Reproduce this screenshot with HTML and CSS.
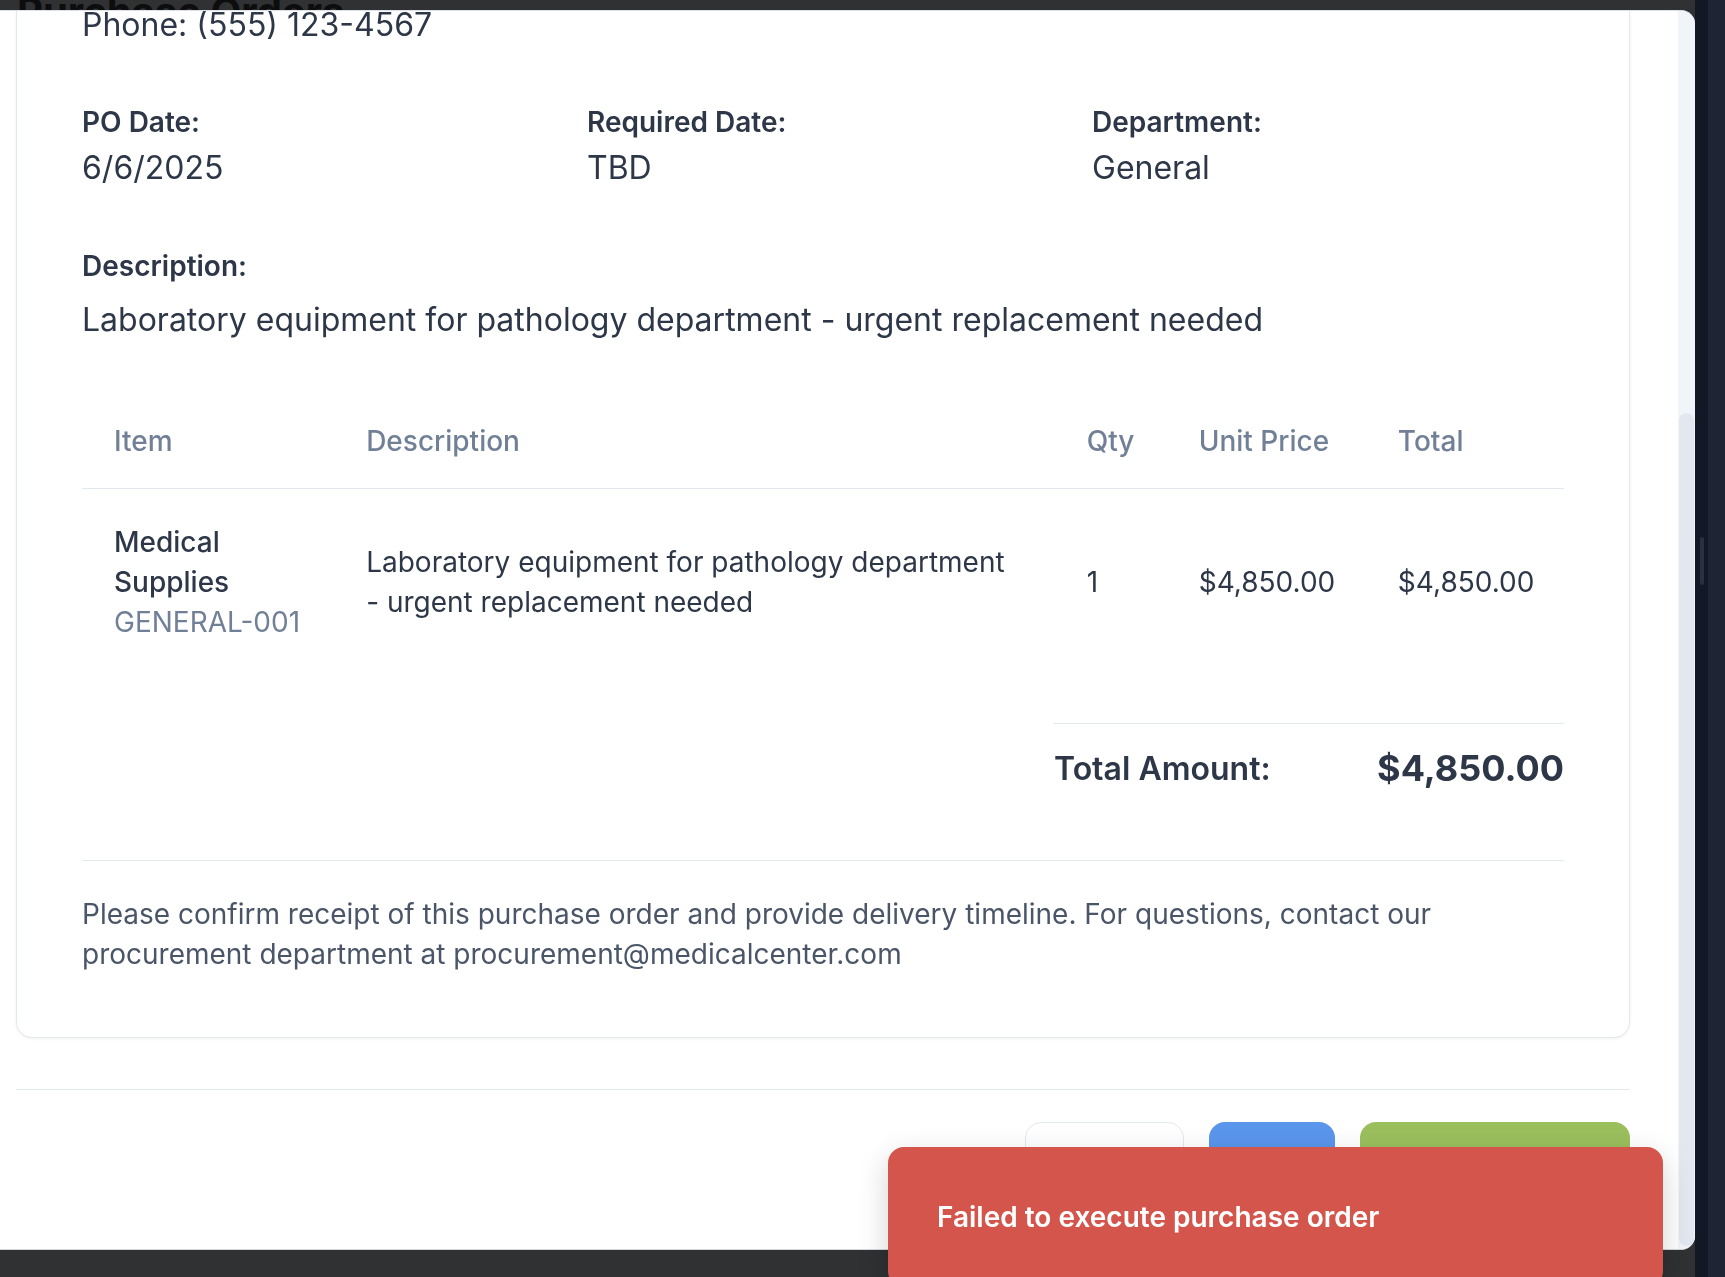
FILE: index.html
```html
<!DOCTYPE html>
<html lang="en">
<head>
<meta charset="utf-8">
<title>Purchase Order Preview</title>
<link rel="stylesheet" href="styles.css">
</head>
<body>
<div class="page">
  <main class="page-main">
    <h1 class="page-title">Purchase Orders</h1>
  </main>
  <aside class="page-rail">
    <div class="rail-a"><div class="rail-thumb"></div></div>
    <div class="rail-b"></div>
  </aside>
</div>

<div class="modal">
  <div class="modal-body">
    <section class="po-card">
      <div class="po-head">
        <div class="po-title">PURCHASE ORDER</div>
        <div class="po-number">PO-2025-0042</div>
      </div>
      <div class="vendor">
        <p class="vendor-heading">Vendor Information</p>
        <p>MedTech Supplies Inc.</p>
        <p>1250 Industrial Parkway, Suite 300</p>
        <p>vendor@medtechsupplies.com</p>
        <p>Phone: (555) 123-4567</p>
      </div>

      <div class="info-grid">
        <div class="info-item">
          <div class="label">PO Date:</div>
          <div class="value">6/6/2025</div>
        </div>
        <div class="info-item">
          <div class="label">Required Date:</div>
          <div class="value">TBD</div>
        </div>
        <div class="info-item">
          <div class="label">Department:</div>
          <div class="value">General</div>
        </div>
      </div>

      <div class="desc-block">
        <div class="label">Description:</div>
        <div class="value desc-value">Laboratory equipment for pathology department - urgent replacement needed</div>
      </div>

      <table class="items">
        <colgroup>
          <col class="col-item">
          <col class="col-desc">
          <col class="col-qty">
          <col class="col-unit">
          <col class="col-total">
        </colgroup>
        <thead>
          <tr>
            <th>Item</th>
            <th>Description</th>
            <th>Qty</th>
            <th>Unit Price</th>
            <th>Total</th>
          </tr>
        </thead>
        <tbody>
          <tr>
            <td>
              <div class="item-name">Medical Supplies</div>
              <div class="item-code">GENERAL-001</div>
            </td>
            <td>Laboratory equipment for pathology department - urgent replacement needed</td>
            <td>1</td>
            <td>$4,850.00</td>
            <td>$4,850.00</td>
          </tr>
        </tbody>
      </table>

      <div class="totals">
        <span class="total-label">Total Amount:</span>
        <span class="total-value">$4,850.00</span>
      </div>

      <div class="notes">Please confirm receipt of this purchase order and provide delivery timeline. For questions, contact our procurement department at procurement@medicalcenter.com</div>
    </section>

    <div class="modal-footer">
      <button class="btn btn-outline">Cancel</button>
      <button class="btn btn-blue">Print</button>
      <button class="btn btn-green">Execute Order</button>
    </div>
  </div>
  <div class="scroll-track"><div class="scroll-thumb"></div></div>
</div>

<div class="toast" role="alert">Failed to execute purchase order</div>
</body>
</html>
```

FILE: styles.css
```css
* { box-sizing: border-box; }

html, body {
  margin: 0;
  height: 100%;
}

body {
  font-family: Inter, "Noto Sans", "Liberation Sans", sans-serif;
  background: #303133;
  color: #2d3748;
  overflow: hidden;
}

/* page behind the overlay */
.page {
  display: flex;
  height: 100vh;
}

.page-main {
  flex: 1;
  background: #303133;
}

.page-title {
  margin: -12px 0 0 17px;
  font-size: 40px;
  line-height: 48px;
  font-weight: 700;
  color: #0d0d0d;
}

.page-rail {
  display: flex;
  flex: none;
}

.rail-a {
  width: 13px;
  background: #131826;
  padding-top: 537px;
}

.rail-thumb {
  width: 4px;
  height: 48px;
  margin-left: 5px;
  border-radius: 2px;
  background: #2a3041;
}

.rail-b {
  width: 17px;
  background: #1e2433;
}

/* modal */
.modal {
  position: fixed;
  top: 10px;
  left: -20px;
  width: 1715px;
  height: 1240px;
  display: flex;
  background: #fff;
  border-top: 1px solid #dbe1ea;
  border-bottom: 1px solid #d3d8e0;
  border-radius: 0 14px 14px 0;
  overflow: hidden;
}

.modal-body {
  flex: 1;
  min-width: 0;
  display: flex;
  flex-direction: column;
  justify-content: flex-end;
  overflow: hidden;
  padding: 0 48px 44px 36px;
}

.scroll-track {
  flex: none;
  width: 17px;
  background: #f1f5f9;
  display: flex;
  flex-direction: column;
  justify-content: flex-end;
  padding: 0 1px 3px;
}

.scroll-thumb {
  height: 833px;
  border-radius: 8px;
  background: #e2e8f0;
}

/* card */
.po-card {
  flex-shrink: 0;
  background: #fff;
  border: 1px solid #e2e8f0;
  border-radius: 16px;
  padding: 40px 65px 63px;
  box-shadow: 0 1px 3px rgba(15, 23, 42, 0.06);
}

.po-head {
  display: flex;
  justify-content: space-between;
  padding-bottom: 30px;
  margin-bottom: 30px;
  border-bottom: 1px solid #e2e8f0;
}

.po-title {
  font-size: 40px;
  font-weight: 700;
}

.po-number {
  font-size: 32px;
  color: #718096;
}

.vendor p {
  margin: 0;
  font-size: 32px;
  line-height: 44px;
}

.vendor .vendor-heading {
  font-weight: 600;
  font-size: 28px;
  margin-bottom: 8px;
}

.info-grid {
  margin-top: 56px;
  display: grid;
  grid-template-columns: repeat(3, 1fr);
  column-gap: 33px;
}

.label {
  font-size: 28px;
  line-height: 38px;
  font-weight: 600;
  color: #2d3748;
}

.value {
  margin-top: 5px;
  font-size: 32px;
  line-height: 44px;
  color: #2d3748;
}

.desc-block {
  margin-top: 57px;
}

.desc-block .desc-value {
  margin-top: 13px;
}

/* items table */
.items {
  margin-top: 52px;
  width: 100%;
  border-collapse: collapse;
  table-layout: fixed;
}

.col-item { width: 252px; }
.col-desc { width: 720px; }
.col-qty { width: 112px; }
.col-unit { width: 199px; }
.col-total { width: 198px; }

.items th {
  text-align: left;
  font-weight: 500;
  color: #718096;
  font-size: 28px;
  line-height: 40px;
  padding: 27px 32px;
  border-bottom: 1px solid #e2e8f0;
}

.items td {
  padding: 33px 32px;
  font-size: 28px;
  line-height: 40px;
  vertical-align: middle;
  color: #2d3748;
}

.item-name {
  font-weight: 500;
}

.item-code {
  color: #718096;
}

/* totals */
.totals {
  margin-top: 48px;
  margin-left: auto;
  width: 510px;
  border-top: 1px solid #e2e8f0;
  padding: 20px 0;
  display: flex;
  justify-content: space-between;
  align-items: center;
  line-height: 49px;
}

.total-label {
  font-size: 32px;
  font-weight: 600;
}

.total-value {
  font-size: 36px;
  font-weight: 700;
}

.notes {
  margin-top: 47px;
  border-top: 1px solid #e2e8f0;
  padding-top: 33px;
  font-size: 28px;
  line-height: 40px;
  color: #4a5568;
}

/* footer */
.modal-footer {
  flex-shrink: 0;
  margin-top: 51px;
  border-top: 1px solid #e2e8f0;
  padding-top: 32px;
  display: flex;
  justify-content: flex-end;
  gap: 25px;
}

.btn {
  height: 83px;
  border-radius: 16px;
  font-family: inherit;
  font-size: 28px;
  font-weight: 500;
  border: 1px solid transparent;
  padding: 0 33px;
}

.btn-outline {
  width: 159px;
  background: #fff;
  border-color: #e2e8f0;
  color: #2d3748;
}

.btn-blue {
  width: 126px;
  background: #5a96ec;
  color: #fff;
}

.btn-green {
  width: 270px;
  background: #9bbf5d;
  color: #fff;
}

/* toast */
.toast {
  position: fixed;
  left: 888px;
  top: 1147px;
  width: 775px;
  padding: 51px 49px;
  background: #d4554b;
  color: #fff;
  font-size: 28px;
  font-weight: 600;
  line-height: 38px;
  border-radius: 16px;
  box-shadow: 0 10px 30px rgba(0, 0, 0, 0.18);
}
```
